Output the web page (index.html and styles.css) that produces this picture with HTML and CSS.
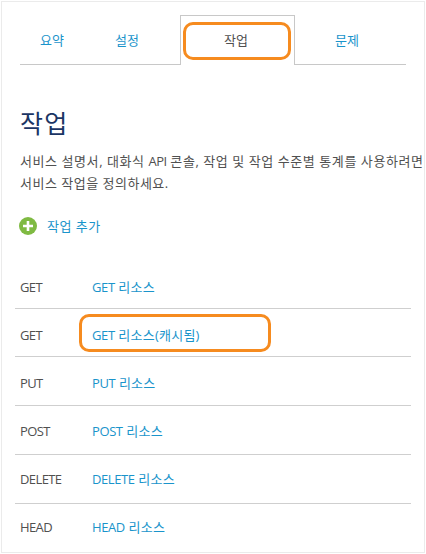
FILE: index.html
```html
<!DOCTYPE html>
<html lang="ko">
<head>
<meta charset="utf-8">
<title>작업</title>
<link rel="stylesheet" href="styles.css">
</head>
<body>
<main class="panel">
  <nav class="tabs">
    <a class="tab tab-summary"><span>요약</span></a>
    <a class="tab tab-settings"><span>설정</span></a>
    <a class="tab tab-active"><span class="tab-highlight">작업</span></a>
    <a class="tab tab-issues"><span>문제</span></a>
  </nav>
  <h1>작업</h1>
  <p class="intro"><span class="line-one">서비스 설명서, 대화식 <span class="latin">API</span> 콘솔, 작업 및 작업 수준별 통계를 사용하려면</span><br><span class="line-two">서비스 작업을 정의하세요.</span></p>
  <a class="add">
    <svg width="18" height="18" viewBox="0 0 18 18"><circle cx="9" cy="9" r="9" fill="#7fba42"/><path d="M9 4v10M4 9h10" stroke="#fff" stroke-width="2.6"/></svg>
    <span>작업 추가</span>
  </a>
  <div class="operations">
    <div class="row"><span class="latin">GET</span><a><span class="latin">GET</span> 리소스</a></div>
    <div class="row"><span class="latin">GET</span><a class="highlight"><span class="latin">GET</span> 리소스(캐시됨)</a></div>
    <div class="row"><span class="latin">PUT</span><a><span class="latin">PUT</span> 리소스</a></div>
    <div class="row"><span class="latin">POST</span><a><span class="latin">POST</span> 리소스</a></div>
    <div class="row"><span class="latin">DELETE</span><a><span class="latin">DELETE</span> 리소스</a></div>
    <div class="row"><span class="latin">HEAD</span><a><span class="latin">HEAD</span> 리소스</a></div>
  </div>
</main>
</body>
</html>
```
FILE: styles.css
```css
* { box-sizing: border-box; }
body {
  margin: 0;
  padding: 1px;
  background: #fff;
  color: #505050;
  font: 13px/22px "Open Sans", "Noto Sans CJK KR", sans-serif;
  overflow: hidden;
}
.panel {
  width: 424px;
  height: 552px;
  border: 1px solid #ebebeb;
  padding: 13px 0 0 13px;
}
a { color: #1a94cb; }
.tabs {
  display: grid;
  grid-template-columns: 64px 96px 115px 111px;
  height: 50px;
  margin-left: 5px;
}
.tab {
  display: flex;
  align-items: center;
  justify-content: center;
  border-bottom: 1px solid #c8c8c8;
}
.tab-summary, .tab-settings, .tab-issues { padding-top: 1px; }
.tab-settings { padding-right: 10px; }
.tab-issues { padding-right: 7px; }
.tab-active {
  border: 1px solid #c8c8c8;
  border-bottom: 0;
  color: #505050;
  align-items: flex-start;
  padding: 6px 0 0;
}
.tab-highlight {
  width: 108px;
  height: 38px;
  border: 3px solid #f68b1f;
  border-radius: 10px;
  line-height: 31px;
  text-align: center;
  margin-right: 1px;
  padding-right: 2px;
}
h1 {
  margin: 41px 0 0 5px;
  color: #1b3564;
  font-size: 25px;
  line-height: 34px;
  font-weight: 400;
  letter-spacing: 1.3px;
}
.intro {
  margin: 10px 0 0 5px;
  white-space: nowrap;
}
.line-one { letter-spacing: 0.57px; }
.line-two { letter-spacing: 0.5px; }
.add {
  display: flex;
  align-items: center;
  gap: 10px;
  height: 22px;
  margin: 21px 0 0 4px;
  letter-spacing: 0.5px;
}
.add span { margin-top: -1px; }
.operations {
  width: 396px;
  margin-top: 30px;
}
.row {
  display: grid;
  grid-template-columns: 72px 1fr;
  align-items: start;
  height: 49px;
  padding: 14px 0 0 5px;
  border-bottom: 1px solid #cfcfcf;
  line-height: 24px;
  letter-spacing: 0.25px;
}
.latin { letter-spacing: -0.6px; }
a .latin { letter-spacing: -0.4px; }
.row:first-child { height: 42px; padding-top: 8px; }
.row:nth-child(2) { height: 48px; padding-top: 14px; }
.row:nth-child(4) { padding-top: 13px; }
.row:nth-child(5) { padding-top: 12px; }
.row:last-child { border: 0; padding-top: 11px; }
.highlight {
  width: 192px;
  height: 38px;
  margin: -9px 0 0 -13px;
  padding-left: 10px;
  border: 3px solid #f68b1f;
  border-radius: 10px;
  line-height: 36px;
}
```
